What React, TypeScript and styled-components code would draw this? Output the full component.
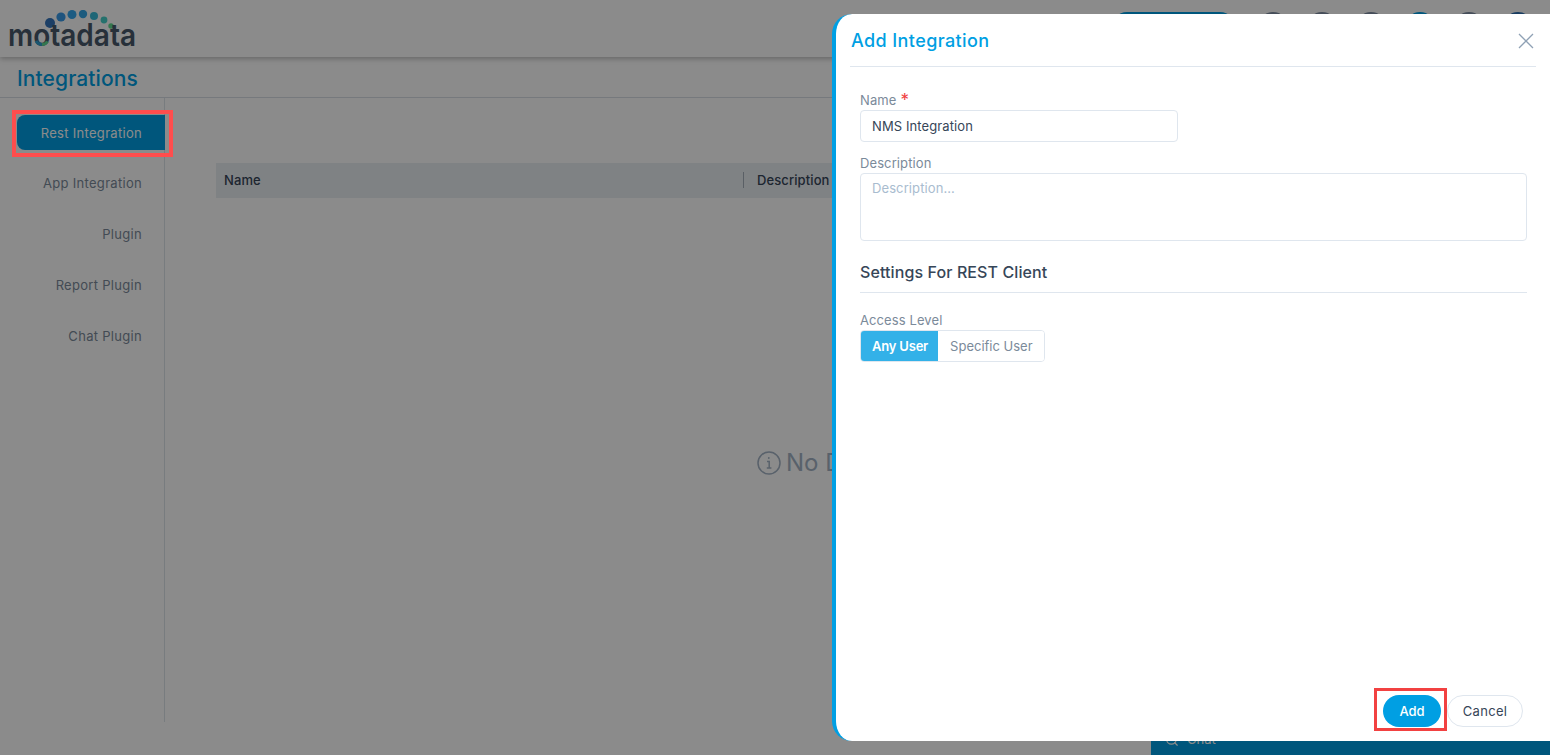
import React from 'react';
import styled, { createGlobalStyle } from 'styled-components';
import { Search } from 'lucide-react';

const GlobalStyle = createGlobalStyle`
  html, body {
    margin: 0;
    height: 100%;
    overflow: hidden;
    background: #fff;
    font-family: Inter, "Open Sans", sans-serif;
  }
  * { box-sizing: border-box; }
`;

const Page = styled.div`
  display: flex;
  flex-direction: column;
  width: 1550px;
  height: 756px;
  overflow: hidden;
  position: relative;
`;

const Header = styled.header`
  display: flex;
  align-items: flex-start;
  justify-content: space-between;
  height: 57px;
  padding: 10px 17px 0 8px;
  box-shadow: 0 2px 5px rgba(0, 0, 0, 0.25);
`;

const HeaderTools = styled.div`
  display: flex;
  align-items: flex-start;
  gap: 19px;
  padding-top: 2px;
`;

const QuickButton = styled.div`
  width: 125px;
  height: 32px;
  margin-right: 3px;
  border-radius: 16px;
  background: #009fe3;
`;

const Avatar = styled.div<{ $color: string }>`
  width: 30px;
  height: 30px;
  border-radius: 50%;
  background: ${p => p.$color};
`;

const TitleBar = styled.div`
  display: flex;
  align-items: center;
  height: 41px;
  padding: 3px 0 0 17px;
  border-bottom: 1px solid #d8dfe6;
`;

const PageTitle = styled.h1`
  margin: 0;
  font-size: 21px;
  font-weight: 500;
  letter-spacing: 0.1px;
  color: #009fe3;
`;

const Content = styled.div`
  display: flex;
  height: 624px;
`;

const Sidebar = styled.nav`
  display: flex;
  flex-direction: column;
  width: 165px;
  flex: none;
  padding-top: 17px;
  border-right: 1px solid #dde3ea;
`;

const NavItem = styled.div<{ $active?: boolean }>`
  position: relative;
  display: flex;
  align-items: center;
  justify-content: flex-end;
  height: ${p => (p.$active ? '35px' : '51px')};
  margin: ${p => (p.$active ? '0 -1px 7px 17px' : '0')};
  padding-right: ${p => (p.$active ? '23px' : '22px')};
  border-radius: 8px 0 0 8px;
  font-size: 13px;
  letter-spacing: 0.3px;
  color: ${p => (p.$active ? '#fff' : '#7b8a9a')};
  background: ${p => (p.$active ? '#009fe3' : 'transparent')};
`;

const Highlight = styled.span`
  position: absolute;
  z-index: 2;
  top: -5px;
  bottom: -7px;
  left: -5px;
  right: -8px;
  border: 4px solid #ff4d4d;
`;

const Main = styled.main`
  display: flex;
  flex-direction: column;
  flex: 1;
  padding: 65px 16px 0 51px;
`;

const TableHead = styled.div`
  display: flex;
  align-items: center;
  height: 35px;
  padding: 0 0 1px 8px;
  background: #eaeef3;
  font-size: 13px;
  font-weight: 500;
  letter-spacing: 0.1px;
  color: #364658;
`;

const HeadCell = styled.div<{ $width?: number }>`
  width: ${p => (p.$width ? `${p.$width}px` : 'auto')};
  flex: ${p => (p.$width ? 'none' : '1')};
  padding-left: ${p => (p.$width ? '0' : '13px')};
  border-left: ${p => (p.$width ? 'none' : '1px solid #a5afba')};
  line-height: 16px;
`;

const EmptyState = styled.div`
  display: flex;
  align-items: center;
  gap: 5px;
  margin: 250px 0 0 541px;
  font-size: 24px;
  color: #a3b3c4;
`;

const ChatBar = styled.div`
  position: absolute;
  right: 0;
  bottom: 1px;
  display: flex;
  align-items: flex-start;
  gap: 8px;
  width: 399px;
  height: 30px;
  padding: 4px 0 0 14px;
  background: #009fe3;
  color: #fff;
  font-size: 13px;
  line-height: 20px;
`;

const Backdrop = styled.div`
  position: absolute;
  z-index: 1;
  inset: 0 0 1px 0;
  background: rgba(0, 0, 0, 0.455);
`;

const Modal = styled.aside`
  position: absolute;
  z-index: 3;
  top: 14px;
  left: 832px;
  right: 0;
  height: 727px;
  display: flex;
  flex-direction: column;
  background: #fff;
  border-left: 4px solid #009fe3;
  border-radius: 20px 0 0 20px;
`;

const ModalHeader = styled.div`
  display: flex;
  align-items: center;
  justify-content: space-between;
  height: 53px;
  margin: 0 14px;
  padding: 1px 2px 0 1px;
  border-bottom: 1px solid #dfe6ee;
`;

const ModalTitle = styled.h2`
  margin: 0;
  font-size: 18px;
  font-weight: 500;
  letter-spacing: 0.4px;
  color: #009fe3;
`;

const CloseButton = styled.button`
  display: flex;
  padding: 0;
  border: none;
  background: none;
`;

const ModalBody = styled.div`
  display: flex;
  flex-direction: column;
  flex: 1;
  padding: 24px 23px 0 24px;
`;

const FieldLabel = styled.label`
  display: block;
  height: 19px;
  font-size: 13px;
  line-height: 19px;
  letter-spacing: 0.1px;
  color: #7b8a9a;
`;

const Required = styled.span`
  margin-left: 4px;
  font-size: 17px;
  line-height: 0;
  vertical-align: -1px;
  color: #f04040;
`;

const TextInput = styled.div`
  display: flex;
  align-items: center;
  width: 318px;
  height: 32px;
  margin-bottom: 12px;
  padding-left: 11px;
  border: 1px solid #dfe6ee;
  border-radius: 4px;
  font-size: 13px;
  letter-spacing: 0.1px;
  color: #364658;
`;

const TextArea = styled.div`
  height: 68px;
  padding: 6px 11px;
  border: 1px solid #dfe6ee;
  border-radius: 4px;
  font-size: 13px;
  letter-spacing: 0.1px;
  color: #a9bccf;
`;

const SectionHeading = styled.h3`
  margin: 21px 0 18px;
  padding-bottom: 9px;
  border-bottom: 1px solid #dfe6ee;
  font-size: 16px;
  line-height: 21px;
  font-weight: 500;
  letter-spacing: 0.1px;
  color: #364658;
`;

const Toggle = styled.div`
  display: inline-flex;
  align-self: flex-start;
  height: 32px;
  border: 1px solid #dfe6ee;
  border-radius: 4px;
  overflow: hidden;
`;

const ToggleOption = styled.div<{ $active?: boolean }>`
  display: flex;
  align-items: center;
  padding: ${p => (p.$active ? '0 10px 0 11px' : '0 11px 0 12px')};
  font-size: 13px;
  font-weight: ${p => (p.$active ? 600 : 400)};
  letter-spacing: ${p => (p.$active ? '-0.2px' : '0')};
  color: ${p => (p.$active ? '#fff' : '#7b8a9a')};
  background: ${p => (p.$active ? '#33b1e8' : '#fff')};
`;

const ModalFooter = styled.div`
  display: flex;
  justify-content: flex-end;
  gap: 6px;
  padding: 0 27px 14px 0;
`;

const AddButton = styled.button`
  position: relative;
  width: 58px;
  height: 32px;
  border: none;
  border-radius: 16px;
  background: #009fe3;
  color: #fff;
  font: 500 13px Inter, sans-serif;
`;

const CancelButton = styled.button`
  width: 76px;
  height: 32px;
  border: 1px solid #dfe6ee;
  border-radius: 16px;
  background: #fff;
  color: #364658;
  font: 400 13px Inter, sans-serif;
  letter-spacing: 0.3px;
`;

const AddHighlight = styled.span`
  position: absolute;
  top: -7px;
  bottom: -4px;
  left: -9px;
  right: -6px;
  border: 3px solid #f24141;
`;

const Logo = () => (
  <svg width="160" height="47" viewBox="0 0 160 47">
    <g transform="translate(2 0)">
      <circle cx="40" cy="13" r="5" fill="#3574bb" />
      <circle cx="51" cy="7" r="4.6" fill="#3a9ae8" />
      <circle cx="62" cy="4.5" r="4.5" fill="#35a8ee" />
      <circle cx="73" cy="4" r="4.2" fill="#35a8e8" />
      <circle cx="84" cy="6" r="4" fill="#38bcd8" />
      <circle cx="94" cy="10" r="3.4" fill="#45d0c8" />
      <circle cx="101" cy="16" r="2.7" fill="#60d890" />
    </g>
    <text
      x="0"
      y="36"
      fontFamily="Inter, sans-serif"
      fontSize="31"
      fontWeight="600"
      fill="#48596b"
      textLength="128"
      lengthAdjust="spacingAndGlyphs"
    >
      motadata
    </text>
    <g transform="translate(2 0)" fill="none" strokeWidth="3">
      <path d="M26 31A6.8 6.8 0 0 0 32 34.5" stroke="#2f9fd0" />
      <path d="M32 34.5A6.8 6.8 0 0 0 37.5 31.5" stroke="#60d890" />
    </g>
  </svg>
);

const InfoIcon = () => (
  <svg width="24" height="24" viewBox="0 0 24 24" fill="none" stroke="#a3b3c4" strokeWidth="1.5">
    <circle cx="12" cy="12" r="11" />
    <path d="M10 10.5h2.2V17M9.8 17h4.6" />
    <circle cx="11.8" cy="7" r="0.9" fill="#a3b3c4" stroke="none" />
  </svg>
);

const CloseIcon = () => (
  <svg width="16" height="16" viewBox="0 0 16 16" fill="none" stroke="#8fa1b5" strokeWidth="1.3">
    <path d="M1 1L15 15M15 1L1 15" />
  </svg>
);

const avatars = ['#7f8ea3', '#7f8ea3', '#7f8ea3', '#009fe3', '#7f8ea3', '#2f6fb0'];

export default function App() {
  return (
    <Page>
      <GlobalStyle />
      <Header>
        <Logo />
        <HeaderTools>
          <QuickButton />
          {avatars.map((color, i) => (
            <Avatar key={i} $color={color} />
          ))}
        </HeaderTools>
      </Header>
      <TitleBar>
        <PageTitle>Integrations</PageTitle>
      </TitleBar>
      <Content>
        <Sidebar>
          <NavItem $active>
            Rest Integration
            <Highlight />
          </NavItem>
          <NavItem>App Integration</NavItem>
          <NavItem>Plugin</NavItem>
          <NavItem>Report Plugin</NavItem>
          <NavItem>Chat Plugin</NavItem>
        </Sidebar>
        <Main>
          <TableHead>
            <HeadCell $width={519}>Name</HeadCell>
            <HeadCell>Description</HeadCell>
          </TableHead>
          <EmptyState>
            <InfoIcon />
            No Data Found
          </EmptyState>
        </Main>
      </Content>
      <ChatBar>
        <Search size={14} style={{ marginTop: 4 }} />
        Chat
      </ChatBar>
      <Backdrop />
      <Modal>
        <ModalHeader>
          <ModalTitle>Add Integration</ModalTitle>
          <CloseButton>
            <CloseIcon />
          </CloseButton>
        </ModalHeader>
        <ModalBody>
          <FieldLabel>
            Name<Required>*</Required>
          </FieldLabel>
          <TextInput>NMS Integration</TextInput>
          <FieldLabel>Description</FieldLabel>
          <TextArea>Description...</TextArea>
          <SectionHeading>Settings For REST Client</SectionHeading>
          <FieldLabel>Access Level</FieldLabel>
          <Toggle>
            <ToggleOption $active>Any User</ToggleOption>
            <ToggleOption>Specific User</ToggleOption>
          </Toggle>
        </ModalBody>
        <ModalFooter>
          <AddButton>
            Add
            <AddHighlight />
          </AddButton>
          <CancelButton>Cancel</CancelButton>
        </ModalFooter>
      </Modal>
    </Page>
  );
}
